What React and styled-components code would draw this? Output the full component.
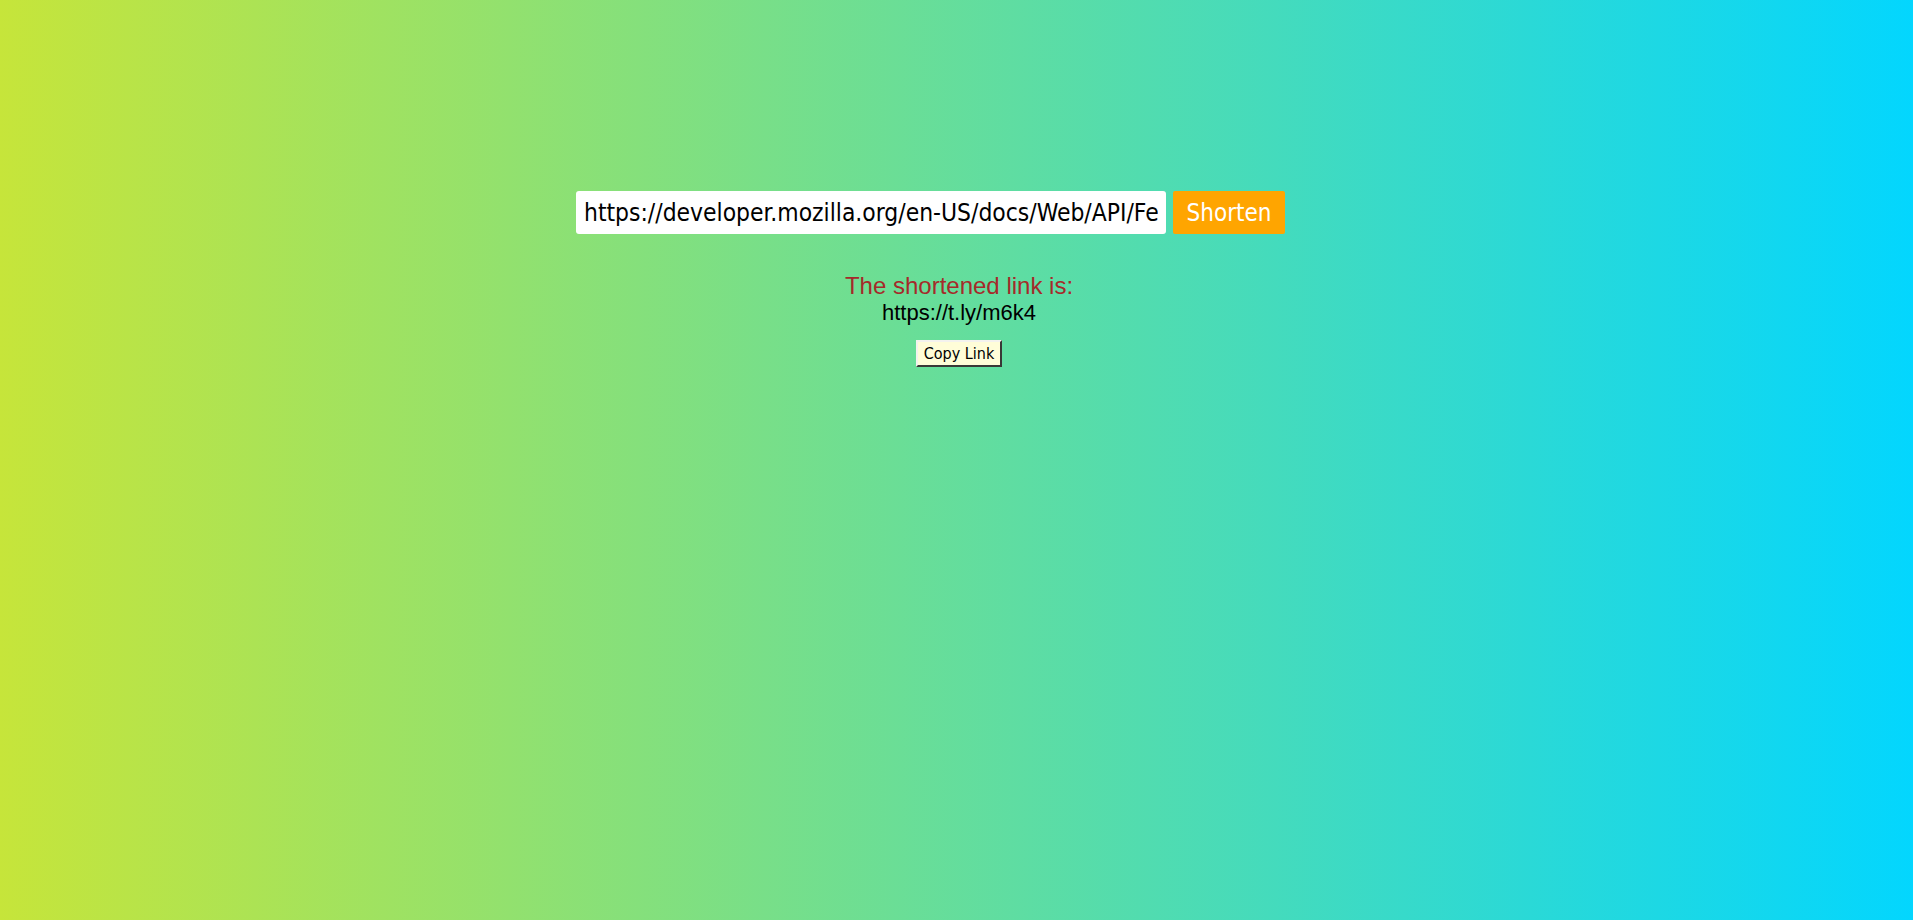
import React, { useState } from 'react';
import styled, { createGlobalStyle } from 'styled-components';

const GlobalStyle = createGlobalStyle`
  html, body {
    margin: 0;
    padding: 0;
    height: 100%;
  }
  #root {
    min-height: 100%;
  }
`;

const Page = styled.main`
  min-height: 100vh;
  box-sizing: border-box;
  display: flex;
  flex-direction: column;
  align-items: center;
  padding-top: 191px;
  background: linear-gradient(to right, #c6e53a, #03d6fe);
`;

const Form = styled.form`
  display: flex;
  align-items: stretch;
  gap: 7px;
  padding-right: 52px;
`;

const UrlInput = styled.input`
  width: 590px;
  height: 43px;
  box-sizing: border-box;
  padding: 0 8px;
  border: none;
  border-radius: 3px;
  outline: none;
  font-family: "DejaVu Sans Condensed", "DejaVu Sans", Tahoma, sans-serif;
  font-stretch: condensed;
  font-size: 24.4px;
  color: #000;
  background: #fff;
`;

const ShortenButton = styled.button`
  width: 112px;
  height: 43px;
  padding: 0;
  border: none;
  border-radius: 2px;
  font-family: "DejaVu Sans Condensed", "DejaVu Sans", Tahoma, sans-serif;
  font-stretch: condensed;
  font-size: 24px;
  color: #fff;
  background: #ffa500;
  cursor: pointer;
`;

const Result = styled.section`
  display: flex;
  flex-direction: column;
  align-items: center;
  margin-top: 38px;
  padding-left: 5px;
  font-family: "Liberation Sans", Arial, sans-serif;
`;

const Label = styled.p`
  margin: 0;
  font-size: 24px;
  line-height: 28px;
  color: #a52a2a;
`;

const ShortLink = styled.p`
  margin: 0;
  font-size: 22px;
  line-height: 26px;
  color: #000;
`;

const CopyButton = styled.button`
  margin-top: 14px;
  width: 86px;
  height: 27px;
  padding: 0;
  border: 2px outset #d4d0c8;
  border-color: #f4f2ee #8d8b86 #8d8b86 #f4f2ee;
  border-radius: 0;
  font-family: "DejaVu Sans Condensed", "DejaVu Sans", Tahoma, sans-serif;
  font-stretch: condensed;
  font-size: 16px;
  color: #000;
  background: #fffdd8;
  cursor: pointer;
`;

export default function App() {
  const [url, setUrl] = useState('https://developer.mozilla.org/en-US/docs/Web/API/Fetch_API/Using_Fetch');
  const shortLink = 'https://t.ly/m6k4';

  return (
    <>
      <GlobalStyle />
      <Page>
        <Form onSubmit={(e) => e.preventDefault()}>
          <UrlInput value={url} onChange={(e) => setUrl(e.target.value)} />
          <ShortenButton type="submit">Shorten</ShortenButton>
        </Form>
        <Result>
          <Label>The shortened link is:</Label>
          <ShortLink>{shortLink}</ShortLink>
          <CopyButton onClick={() => navigator.clipboard?.writeText(shortLink)}>Copy Link</CopyButton>
        </Result>
      </Page>
    </>
  );
}
